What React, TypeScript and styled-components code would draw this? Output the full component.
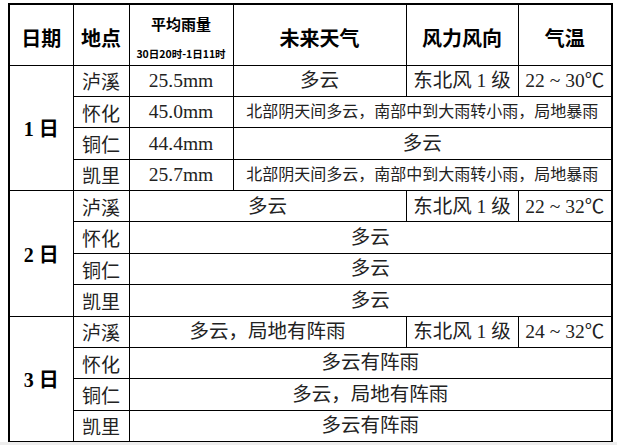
import styled, { createGlobalStyle } from 'styled-components'

const GlobalStyle = createGlobalStyle`
  html, body {
    margin: 0;
    padding: 0;
    background: #ededed;
  }
`

const Page = styled.div`
  height: 442px;
  background: #fff;
  padding: 3px 0 0 8px;
  box-sizing: border-box;
`

const Table = styled.table`
  width: 603px;
  table-layout: fixed;
  border-collapse: collapse;
  border: 2px solid #000;
  font-family: 'Liberation Serif', 'Noto Sans CJK SC', serif;
  color: #222;

  td,
  th {
    border: 1px solid #000;
    padding: 0;
    text-align: center;
    vertical-align: middle;
    white-space: nowrap;
    overflow: hidden;
  }
`

const HeadRow = styled.tr`
  height: 61px;
`

const Row = styled.tr`
  height: 31.4px;
`

const HeadCell = styled.th`
  font-family: 'Noto Sans CJK SC', sans-serif;
  font-weight: 700;
  font-size: 20px;
  color: #000;
  padding-top: 6px !important;
`

const RainHead = styled.th`
  font-family: 'Noto Sans CJK SC', sans-serif;
  font-weight: 700;
  color: #000;
  vertical-align: top !important;
  padding-top: 9px !important;
`

const RainTitle = styled.div`
  font-size: 15px;
  line-height: 20px;
`

const RainSub = styled.div`
  font-size: 10.5px;
  line-height: 12px;
  margin-top: 14px;
`

const DayCell = styled.td`
  font-family: 'Liberation Serif', 'Noto Sans CJK SC', serif;
  font-weight: 700;
  font-size: 20px;
  color: #000;
`

const PlaceCell = styled.td`
  font-family: 'Noto Sans CJK SC', sans-serif;
  font-size: 19px;
  line-height: 1;
`

const Cell = styled.td<{ $small?: boolean }>`
  font-size: ${(p) => (p.$small ? '16px' : '19.5px')};
  line-height: 1;
`

const longText = '北部阴天间多云，南部中到大雨转小雨，局地暴雨'

export default function App() {
  return (
    <>
      <GlobalStyle />
      <Page>
        <Table>
          <colgroup>
            <col style={{ width: 64 }} />
            <col style={{ width: 56 }} />
            <col style={{ width: 104 }} />
            <col style={{ width: 173 }} />
            <col style={{ width: 112 }} />
            <col style={{ width: 94 }} />
          </colgroup>
          <thead>
            <HeadRow>
              <HeadCell>日期</HeadCell>
              <HeadCell>地点</HeadCell>
              <RainHead>
                <RainTitle>平均雨量</RainTitle>
                <RainSub>30日20时-1日11时</RainSub>
              </RainHead>
              <HeadCell>未来天气</HeadCell>
              <HeadCell>风力风向</HeadCell>
              <HeadCell>气温</HeadCell>
            </HeadRow>
          </thead>
          <tbody>
            <Row>
              <DayCell rowSpan={4}>1 日</DayCell>
              <PlaceCell>泸溪</PlaceCell>
              <Cell>25.5mm</Cell>
              <Cell>多云</Cell>
              <Cell>东北风 1 级</Cell>
              <Cell>22 ~ 30℃</Cell>
            </Row>
            <Row>
              <PlaceCell>怀化</PlaceCell>
              <Cell>45.0mm</Cell>
              <Cell colSpan={3} $small>
                {longText}
              </Cell>
            </Row>
            <Row>
              <PlaceCell>铜仁</PlaceCell>
              <Cell>44.4mm</Cell>
              <Cell colSpan={3}>多云</Cell>
            </Row>
            <Row>
              <PlaceCell>凯里</PlaceCell>
              <Cell>25.7mm</Cell>
              <Cell colSpan={3} $small>
                {longText}
              </Cell>
            </Row>

            <Row>
              <DayCell rowSpan={4}>2 日</DayCell>
              <PlaceCell>泸溪</PlaceCell>
              <Cell colSpan={2}>多云</Cell>
              <Cell>东北风 1 级</Cell>
              <Cell>22 ~ 32℃</Cell>
            </Row>
            <Row>
              <PlaceCell>怀化</PlaceCell>
              <Cell colSpan={4}>多云</Cell>
            </Row>
            <Row>
              <PlaceCell>铜仁</PlaceCell>
              <Cell colSpan={4}>多云</Cell>
            </Row>
            <Row>
              <PlaceCell>凯里</PlaceCell>
              <Cell colSpan={4}>多云</Cell>
            </Row>

            <Row>
              <DayCell rowSpan={4}>3 日</DayCell>
              <PlaceCell>泸溪</PlaceCell>
              <Cell colSpan={2}>多云，局地有阵雨</Cell>
              <Cell>东北风 1 级</Cell>
              <Cell>24 ~ 32℃</Cell>
            </Row>
            <Row>
              <PlaceCell>怀化</PlaceCell>
              <Cell colSpan={4}>多云有阵雨</Cell>
            </Row>
            <Row>
              <PlaceCell>铜仁</PlaceCell>
              <Cell colSpan={4}>多云，局地有阵雨</Cell>
            </Row>
            <Row>
              <PlaceCell>凯里</PlaceCell>
              <Cell colSpan={4}>多云有阵雨</Cell>
            </Row>
          </tbody>
        </Table>
      </Page>
    </>
  )
}
